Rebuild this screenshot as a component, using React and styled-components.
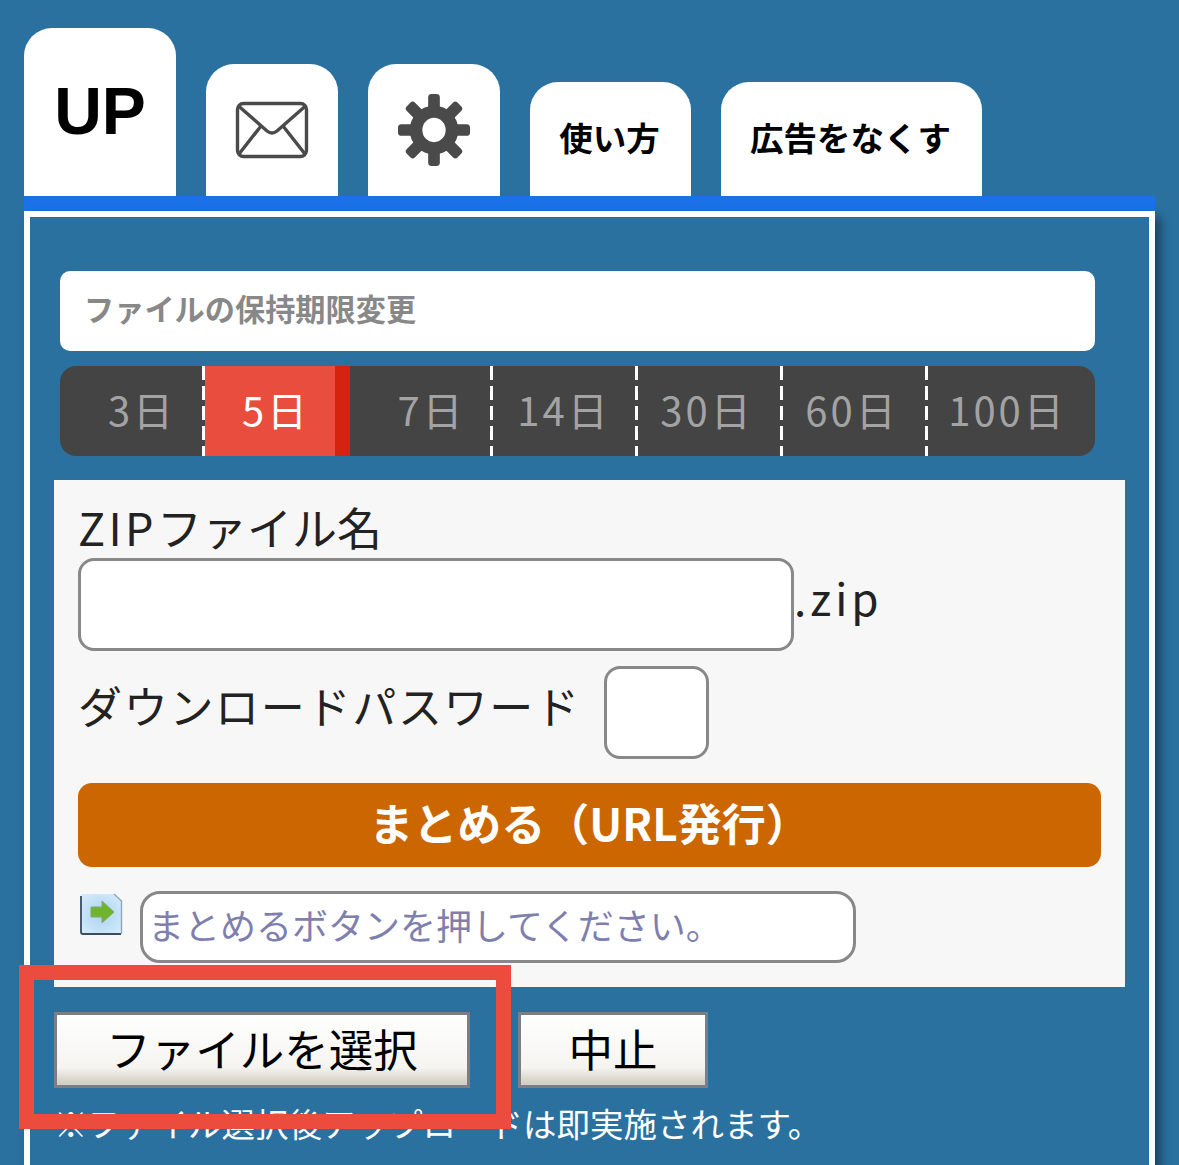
import styled, { createGlobalStyle } from "styled-components";

const jp = `"Noto Sans CJK JP", "Noto Sans", sans-serif`;

const Global = createGlobalStyle`
  html, body { margin: 0; padding: 0; background: #2a71a0; }
  body { height: 1165px; overflow: hidden; font-family: ${jp}; }
  * { box-sizing: border-box; }
`;

const Page = styled.div`
  position: relative;
  height: 1165px;
  padding: 28px 24px 0;
  width: 1179px;
  overflow: hidden;
`;
const Tabs = styled.div`
  display: flex;
  align-items: flex-end;
  gap: 30px;
  height: 168px;
`;
const Tab = styled.div`
  display: flex;
  align-items: center;
  justify-content: center;
  width: ${({ $w }) => $w}px;
  height: ${({ $h }) => $h}px;
  padding-bottom: ${({ $pb }) => $pb || 0}px;
  padding-right: ${({ $pr }) => $pr || 0}px;
  background: #fff;
  border-radius: 28px 28px 0 0;
  color: #000;
  font-size: 33.5px;
  font-weight: 700;
  line-height: 1;
`;
const TabUp = styled(Tab)`
  font-family: "Liberation Sans", Arial, sans-serif;
  font-size: 66px;
`;
const BlueBar = styled.div`
  height: 15px;
  background: #1b72e8;
`;
const Panel = styled.div`
  height: 1000px;
  border: 6px solid #fff;
  padding: 54px 24px 0;
  box-shadow: 6px 6px 10px rgba(0, 0, 0, 0.4);
`;
const PeriodTitle = styled.div`
  margin: 0 30px 0 6px;
  height: 80px;
  display: flex;
  align-items: center;
  padding: 0 0 6px 24px;
  background: #fff;
  border-radius: 10px;
  color: #888;
  font-size: 30.2px;
  font-weight: 700;
`;
const Segments = styled.div`
  display: flex;
  margin: 15px 30px 0 6px;
  height: 90px;
  background: #444;
  border-radius: 16px;
  overflow: hidden;
`;
const Segment = styled.div`
  flex: 0 0 ${({ $w }) => $w}px;
  display: flex;
  align-items: center;
  justify-content: center;
  padding: 0 ${({ $pr }) => $pr || 0}px 5px ${({ $pl }) => $pl || 0}px;
  font-size: 40px;
  letter-spacing: 3px;
  font-weight: 400;
  line-height: 1;
  color: ${({ $on }) => ($on ? "#fff" : "#a3a3a3")};
  background: ${({ $on, $dash }) =>
    $on
      ? "#e94d3d"
      : $dash
        ? "repeating-linear-gradient(to bottom, #fff 0 14px, transparent 14px 20px) right top / 3px 100% no-repeat"
        : "none"};
  border-right: ${({ $on }) => ($on ? "15px solid #d4230f" : "none")};
`;
const Form = styled.div`
  margin-top: 24px;
  height: 507px;
  background: #f7f7f7;
  padding: 24px 24px 0;
  color: #222;
  font-size: 44px;
`;
const Label = styled.div`
  height: 54px;
  font-size: 45px;
  line-height: 46px;
`;
const LatinPart = styled.span`
  letter-spacing: 3.4px;
`;
const Row = styled.div`
  display: flex;
  align-items: ${({ $align }) => $align || "center"};
  margin-top: ${({ $mt }) => $mt || 0}px;
  white-space: nowrap;
`;
const TextBox = styled.div`
  width: ${({ $w }) => $w}px;
  height: ${({ $h }) => $h}px;
  flex: none;
  background: #fff;
  border: 3px solid #888;
  border-radius: 16px;
`;
const ZipExt = styled.span`
  letter-spacing: 4px;
  font-size: 44px;
  line-height: 1;
  padding-bottom: 16px;
`;
const PasswordLabel = styled.span`
  width: 526px;
  flex: none;
  letter-spacing: 1.7px;
  padding-bottom: 16px;
  font-size: 44px;
  line-height: 1;
`;
const SubmitButton = styled.div`
  margin-top: 24px;
  height: 84px;
  display: flex;
  align-items: center;
  justify-content: center;
  padding-bottom: 7px;
  background: #cc6600;
  border-radius: 14px;
  color: #fff;
  font-size: 44px;
  font-weight: 700;
  line-height: 1;
`;
const StatusBox = styled.div`
  width: 716px;
  height: 72px;
  margin-left: 15px;
  display: flex;
  align-items: center;
  padding: 0 0 6px 5px;
  background: #fff;
  border: 3px solid #888;
  border-radius: 20px;
  color: #7f7fae;
  font-size: 36px;
  line-height: 1;
`;
const ArrowIcon = styled.svg`
  width: 47px;
  height: 47px;
  flex: none;
`;
const Buttons = styled.div`
  display: flex;
  gap: 48px;
  margin-top: 25px;
`;
const PlainButton = styled.div`
  width: ${({ $w }) => $w}px;
  height: 76px;
  display: flex;
  align-items: center;
  justify-content: center;
  padding-bottom: 4px;
  border: 3px solid #7a7f86;
  background: linear-gradient(to bottom, #fff 0%, #f5f4f0 75%, #d2d0c4 97%);
  color: #000;
  font-size: 44.5px;
  line-height: 1;
`;
const Note = styled.div`
  margin-top: 13px;
  color: #fff;
  font-size: 33.5px;
  line-height: 44px;
  white-space: nowrap;
`;
const Highlight = styled.div`
  position: absolute;
  left: 19px;
  top: 965px;
  width: 492px;
  height: 164px;
  border: 15px solid #ec4c3e;
`;

const MailIcon = () => (
  <svg width="74" height="58" viewBox="0 0 74 58" fill="none" stroke="#4a4a4a" strokeWidth="3.4">
    <rect x="2.5" y="2.5" width="69" height="53" rx="6" />
    <path d="M3.5 5 L32 30 Q37 34 42 30 L70.5 5" />
    <path d="M26 25 L4 53 M48 25 L70 53" />
  </svg>
);

const GearIcon = () => (
  <svg width="72" height="72" viewBox="0 0 74 74" fill="#4a4a4a">
    {[0, 45, 90, 135].map((a) => (
      <g key={a} transform={`rotate(${a} 37 37)`}>
        <rect x="31" y="0" width="12" height="74" rx="3.5" />
      </g>
    ))}
    <circle cx="37" cy="37" r="25" />
    <ellipse cx="37" cy="37" rx="12" ry="12.5" fill="#fff" />
  </svg>
);

const days = [
  { t: "3日", w: 145, pl: 19, dash: true },
  { t: "5日", w: 145, pl: 12, on: true },
  { t: "7日", w: 143, pl: 20, dash: true },
  { t: "14日", w: 145, pr: 3, dash: true },
  { t: "30日", w: 145, pr: 7, dash: true },
  { t: "60日", w: 145, pr: 7, dash: true },
  { t: "100日", w: 167, pr: 8 },
];

const App = () => (
  <Page>
    <Global />
    <Tabs>
      <TabUp $w={152} $h={168} $pb={3}>UP</TabUp>
      <Tab $w={132} $h={132}><MailIcon /></Tab>
      <Tab $w={132} $h={132}><GearIcon /></Tab>
      <Tab $w={161} $h={114} $pb={5} $pr={2}>使い方</Tab>
      <Tab $w={261} $h={114} $pb={5} $pr={2}>広告をなくす</Tab>
    </Tabs>
    <BlueBar />
    <Panel>
      <PeriodTitle>ファイルの保持期限変更</PeriodTitle>
      <Segments>
        {days.map((d) => (
          <Segment key={d.t} $w={d.w} $pl={d.pl} $pr={d.pr} $on={d.on} $dash={d.dash}>
            {d.t}
          </Segment>
        ))}
      </Segments>
      <Form>
        <Label><LatinPart>ZIP</LatinPart>ファイル名</Label>
        <Row>
          <TextBox $w={716} $h={93} />
          <ZipExt>.zip</ZipExt>
        </Row>
        <Row $mt={15}>
          <PasswordLabel>ダウンロードパスワード</PasswordLabel>
          <TextBox $w={105} $h={93} />
        </Row>
        <SubmitButton>まとめる（URL発行）</SubmitButton>
        <Row $mt={24} $align="flex-start">
          <ArrowIcon viewBox="0 0 47 47">
            <defs>
              <radialGradient id="pageFill" cx="50%" cy="50%" r="65%">
                <stop offset="0%" stopColor="#a9d2f3" />
                <stop offset="100%" stopColor="#d6ebfb" />
              </radialGradient>
            </defs>
            <path d="M2.5 6 Q2.5 3 5 3 H36 L43.5 10 V42 Q43.5 43.5 42 43.5 H5 Q2.5 43.5 2.5 41 Z" fill="url(#pageFill)" />
            <path d="M3 5 V41 Q3 43 5 43 H43" fill="none" stroke="#3a4c60" strokeWidth="1.8" />
            <path d="M36 3 L43.5 10 V43" fill="none" stroke="#8fa6bb" strokeWidth="1.4" />
            <path d="M13 16 H24 V10 L36 21 L24 32 V26 H13 Z" fill="#6fb52c" stroke="#8ba86a" strokeWidth="1" />
          </ArrowIcon>
          <StatusBox>まとめるボタンを押してください。</StatusBox>
        </Row>
      </Form>
      <Buttons>
        <PlainButton $w={416}>ファイルを選択</PlainButton>
        <PlainButton $w={190}>中止</PlainButton>
      </Buttons>
      <Note>※ファイル選択後アップロードは即実施されます。</Note>
    </Panel>
    <Highlight />
  </Page>
);

export default App;
